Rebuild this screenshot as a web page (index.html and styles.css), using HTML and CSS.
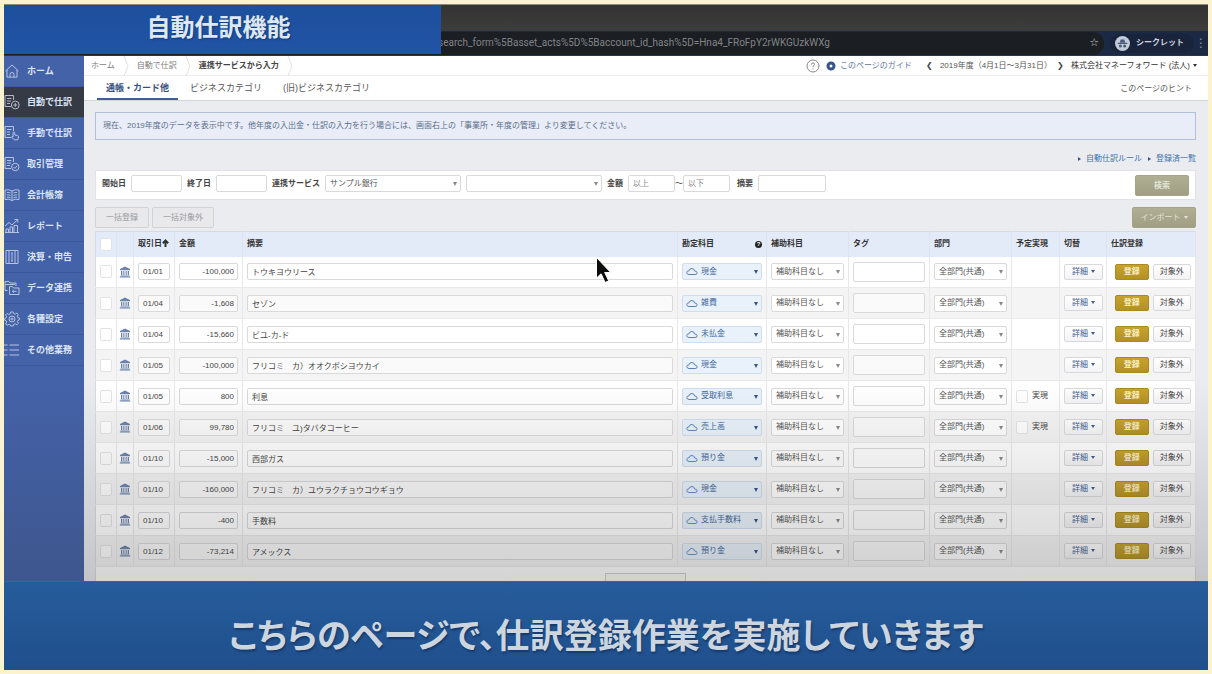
FILE: index.html
```html
<!DOCTYPE html>
<html lang="ja">
<head>
<meta charset="utf-8">
<title>自動仕訳機能</title>
<link rel="stylesheet" href="styles.css">
</head>
<body>
<svg class="sprite" aria-hidden="true">
  <symbol id="i-home" viewBox="0 0 16 16"><path d="M1.500 8 8 2l6.500 6M3 7v7.200h10V7M6 14v-2.500q0-2 2-2t2 2V14"/></symbol>
  <symbol id="i-auto" viewBox="0 0 16 16"><path d="M7 12.500H1V1.500h8.500V6M3 4.500h4.500M3 7h4M3 9.500h3"/><circle cx="11.300" cy="11" r="3.900"/><path d="M11.300 9v4M9.300 11h4"/></symbol>
  <symbol id="i-hand" viewBox="0 0 16 16"><path d="M7 12.500H1V1.500h8.500V6M3 4.500h4.500M3 7h3M3 9.500h3M9 12V7.500q.9-1 1.700 0V10l3 .6q1 .4.8 1.400l-.7 2.800h-3.600L7.500 12q.4-1 1.500-.3"/></symbol>
  <symbol id="i-deal" viewBox="0 0 16 16"><path d="M7 12.500H1V1.500h8.500V6M3 4.500h4.500M3 7h4M3 9.500h3"/><circle cx="11.300" cy="11" r="3.700"/><path d="m9.500 11 1.400 1.400 2.300-2.600"/></symbol>
  <symbol id="i-book" viewBox="0 0 16 16"><path d="M8 4Q5 2 1 3v9.500q4-1 7 1 3-2 7-1V3Q11 2 8 4v9.500M3 5.500q2-.3 3.500.5M3 8q2-.3 3.500.5M3 10.300q2-.3 3.500.5M13 5.500q-2-.3-3.500.5M13 8q-2-.3-3.500.5M13 10.300q-2-.3-3.500.5"/></symbol>
  <symbol id="i-chart" viewBox="0 0 16 16"><path d="M1 14.500h14M2 14v-3h2.500v3M6 14v-5h2.500v5M10 14V7.500h3.500V14M1 8l4-3.500L8 7l5.500-5.200M10.500 1.500h3.300v3"/></symbol>
  <symbol id="i-close" viewBox="0 0 16 16"><path d="M2 1.500h12v13H2zM5 1.500v13M11 1.500v13M7 4h2M8 4v8M7 12h2"/></symbol>
  <symbol id="i-data" viewBox="0 0 16 16"><path d="M3.500 10.500H1v-9h4l1 1.500h6v3M1 4.500h10M5.500 6.500h3l1 1.500h5.500v6.500H5.500zM12.500 11.300h-4m1.500-1.500-1.600 1.500 1.600 1.500"/></symbol>
  <symbol id="i-gear" viewBox="0 0 16 16"><path d="m6.600 1-.4 1.900-1.400.6-1.700-1.100-1.500 1.500 1 1.800L2 7l-1.300.5v1.800l1.500.5.5 1.300-1 1.800 1.400 1.400 1.800-1 1.300.6L6.700 15h2.500l.5-1.600 1.500-.6 1.700 1 1.500-1.500-1-1.700.5-1.200 1.400-.5V7l-1.500-.5-.5-1.300 1-1.600-1.500-1.400-1.600 1-1.400-.5L9.300 1z"/><circle cx="8" cy="8" r="3"/><circle cx="8" cy="8" r="1"/></symbol>
  <symbol id="i-list" viewBox="0 0 16 16"><path d="M0 3h3.500M5.500 3H15M0 8h3.500M5.500 8H15M0 13h3.500M5.500 13H15"/></symbol>
  <symbol id="i-cloud" viewBox="0 0 12 8"><path d="M3 7Q.7 6.800.8 5T3 3.300Q3.600.8 6 1t2.600 2.500q2.400 0 2.500 1.800T9 7z"/></symbol>
  <symbol id="i-bank" viewBox="0 0 12 12"><path d="M6 .5 11 3v1.300H1V3zM2 5h1.300v4H2zM4.300 5h1.100v4H4.300zM6.600 5h1.100v4H6.600zM8.700 5H10v4H8.700zM1.500 9.400h9v.8h-9zM.8 10.600h10.400v1H.800z"/></symbol>
  <symbol id="i-chev" viewBox="0 0 6 20"><path d="m1 0 4 10-4 10"/></symbol>
  <symbol id="i-up" viewBox="0 0 7 8"><path d="M3.500 8V2M.8 4.200 3.500 1.500l2.700 2.700"/></symbol>
</svg>

<div class="frame">
  <header class="browser">
    <div class="tabstrip"></div>
    <div class="toolbar">
      <div class="omnibox">
        <span class="url">search_form%5Basset_acts%5D%5Baccount_id_hash%5D=Hna4_FRoFpY2rWKGUzkWXg</span>
        <span class="star">☆</span>
      </div>
      <div class="incognito">
        <svg viewBox="0 0 14 14"><circle cx="7" cy="7" r="7" fill="#c3cbd9"/><path d="M4.500 6 5.300 3.200h3.400L9.500 6zM2.500 6.400h9v1h-9z" fill="#4a5a78"/><circle cx="5" cy="9.300" r="1.400" fill="#4a5a78"/><circle cx="9" cy="9.300" r="1.400" fill="#4a5a78"/></svg>
        <span>シークレット</span>
      </div>
      <span class="dots">⋮</span>
    </div>
    <h1 class="title">自動仕訳機能</h1>
  </header>

  <div class="app">
    <nav class="side">
      <a href="#"><svg><use href="#i-home"/></svg>ホーム</a>
      <a href="#" class="on"><svg><use href="#i-auto"/></svg>自動で仕訳</a>
      <a href="#"><svg><use href="#i-hand"/></svg>手動で仕訳</a>
      <a href="#"><svg><use href="#i-deal"/></svg>取引管理</a>
      <a href="#"><svg><use href="#i-book"/></svg>会計帳簿</a>
      <a href="#"><svg><use href="#i-chart"/></svg>レポート</a>
      <a href="#"><svg><use href="#i-close"/></svg>決算・申告</a>
      <a href="#"><svg><use href="#i-data"/></svg>データ連携</a>
      <a href="#"><svg><use href="#i-gear"/></svg>各種設定</a>
      <a href="#"><svg><use href="#i-list"/></svg>その他業務</a>
    </nav>

    <main class="main">
      <div class="crumbs">
        <a href="#">ホーム</a><svg><use href="#i-chev"/></svg>
        <a href="#">自動で仕訳</a><svg><use href="#i-chev"/></svg>
        <b>連携サービスから入力</b><svg><use href="#i-chev"/></svg>
        <div class="account">
          <svg class="help" viewBox="0 0 14 14"><circle cx="7" cy="7" r="6"/><path d="M5.400 5.600Q5.400 4 7 4t1.600 1.500Q8.600 6.500 7 7.300V8.300M7 9.400v1"/></svg>
          <a href="#" class="guide"><svg viewBox="0 0 10 10"><circle cx="5" cy="5" r="3"/></svg>このページのガイド</a>
          <b class="arrow">❮</b>
          <span>2019年度（4月1日〜3月31日）</span>
          <b class="arrow">❯</b>
          <span class="company">株式会社マネーフォワード (法人)<i class="caret"></i></span>
        </div>
      </div>
      <div class="tabs">
        <a href="#" class="on">通帳・カード他</a>
        <a href="#">ビジネスカテゴリ</a>
        <a href="#">(旧)ビジネスカテゴリ</a>
        <span class="hint">このページのヒント</span>
      </div>

      <div class="content">
        <p class="notice">現在、2019年度のデータを表示中です。他年度の入出金・仕訳の入力を行う場合には、画面右上の「事業所・年度の管理」より変更してください。</p>
        <div class="links"><a href="#">自動仕訳ルール</a><a href="#">登録済一覧</a></div>

        <form class="filter">
          <label for="from">開始日</label><input id="from" class="box w-date">
          <label for="to">終了日</label><input id="to" class="box w-date">
          <label for="svc">連携サービス</label>
          <span class="select w-svc"><select id="svc"><option>サンプル銀行</option></select></span>
          <span class="select w-svc"><select aria-label="口座"><option></option></select></span>
          <label for="min">金額</label><input id="min" class="box w-num" placeholder="以上"><span class="tilde">〜</span><input class="box w-num" placeholder="以下" aria-label="金額以下">
          <label for="memo" class="memo">摘要</label><input id="memo" class="box w-memo">
          <button type="button" class="olive search">検索</button>
        </form>

        <div class="actions">
          <button class="bulk" disabled>一括登録</button>
          <button class="bulk" disabled>一括対象外</button>
          <button class="olive import">インポート<i class="caret"></i></button>
        </div>

        <table class="grid">
          <colgroup><col class="c-check"><col class="c-icon"><col class="c-date"><col class="c-amount"><col><col class="c-acct"><col class="c-sub"><col class="c-tag"><col class="c-dept"><col class="c-real"><col class="c-detail"><col class="c-reg"></colgroup>
          <thead>
            <tr>
              <th><input type="checkbox" aria-label="すべて選択"></th><th></th>
              <th>取引日<svg class="sort"><use href="#i-up"/></svg></th><th>金額</th><th>摘要</th>
              <th><div class="acct-head">勘定科目<span class="q">?</span></div></th>
              <th>補助科目</th><th>タグ</th><th>部門</th><th>予定実現</th><th>切替</th><th>仕訳登録</th>
            </tr>
          </thead>
          <tbody id="rows"></tbody>
        </table>
        <div class="pager"><div class="pager-box"></div></div>
      </div>
    </main>
    <div class="shade"></div>
    <svg class="cursor" viewBox="0 0 16 28"><path d="M1.500 1.500v20.500l4.600-4.200 4 8.700 3.600-1.700-4-8.300h6z" fill="#0c0c0c" stroke="#fff" stroke-width="1"/></svg>
  </div>

  <footer class="caption">こちらのページで、仕訳登録作業を実施していきます</footer>
</div>
<script src="rows.js"></script>
</body>
</html>
```
FILE: styles.css
```css
* { box-sizing: border-box; }
body {
  margin: 0;
  background: #fbf2cf;
  font: 8px/12px "Liberation Sans", "Noto Sans CJK JP", sans-serif;
  color: #444;
}
a { color: inherit; text-decoration: none; }
input, select, button { font: inherit; color: inherit; margin: 0; }
svg { fill: none; stroke: currentColor; }
.sprite { display: none; }

.frame {
  height: 100vh;
  padding: 4px;
  display: flex;
  flex-direction: column;
}

/* browser chrome */
.browser { position: relative; flex: none; border-top: 1px solid #8b8b80; }
.tabstrip { height: 26px; background: linear-gradient(#333, #3d3d3c); }
.toolbar {
  height: 25px;
  display: flex;
  align-items: center;
  background: #1c2945;
  border-bottom: 1px solid #29344d;
}
.omnibox {
  flex: 1;
  height: 23px;
  display: flex;
  align-items: center;
  justify-content: space-between;
  padding: 0 5px 0 434px;
  background: #1b1e22;
  border-radius: 0 12px 12px 0;
}
.url { font: 10px/14px Roboto, sans-serif; color: #828487; }
.star { font: 700 11px/14px "DejaVu Sans", sans-serif; color: #c4c8ce; }
.incognito {
  display: flex;
  align-items: center;
  gap: 6px;
  margin-left: 6px;
  padding: 0 10px 0 5px;
  height: 19px;
  border-radius: 10px;
  background: #19233b;
  color: #d0d4dc;
  font-weight: 700;
}
.incognito svg { width: 15px; height: 15px; stroke: none; }
.dots { width: 14px; text-align: center; font: 12px/14px "DejaVu Sans", sans-serif; color: #8a93a5; }
.title {
  position: absolute;
  top: 0;
  left: 0;
  width: 437px;
  height: 49px;
  margin: 0;
  padding-right: 8px;
  background: linear-gradient(#1c4f9c, #2254a6);
  font: 700 24px/42px "Noto Sans CJK JP", sans-serif;
  color: #dde8f1;
  text-align: center;
  text-shadow: 1px 1px 2px #123a7a;
}

.app { position: relative; flex: 1; min-height: 0; display: flex; overflow: hidden; }

/* side menu */
.side { width: 80px; flex: none; background: #4462a8; color: #dbe4f5; font-size: 9px; font-weight: 700; }
.side a {
  height: 31px;
  display: flex;
  align-items: center;
  gap: 7px;
  border-bottom: 1px solid #3b589d;
}
.side a.on { background: #363a45; }
.side svg { width: 16px; height: 16px; opacity: .75; }

.main { flex: 1; min-width: 0; display: flex; flex-direction: column; background: #ebecf0; }

.crumbs {
  height: 20px;
  display: flex;
  align-items: center;
  gap: 8px;
  padding: 0 11px 0 7px;
  background: #fff;
  border-bottom: 1px solid #ececee;
  color: #7d7d7d;
}
.crumbs > svg { width: 6px; height: 20px; color: #e2e2e2; }
.crumbs b { color: #444; }
.account { margin-left: auto; display: flex; align-items: center; color: #555; }
.help { width: 14px; height: 14px; color: #888; }
.guide { display: flex; align-items: center; gap: 4px; margin: 0 14px 0 6px; color: #5b779b; }
.guide svg { width: 10px; height: 10px; color: #34548b; stroke-width: 3; }
.account .arrow { color: #444; width: 6px; margin-right: 8px; font-family: "DejaVu Sans", sans-serif; }
.account span + .arrow { margin-left: 5px; }
.company { color: #333; }
.caret {
  display: inline-block;
  margin-left: 3px;
  vertical-align: middle;
  border: 2px solid transparent;
  border-top: 3px solid;
  border-bottom: 0;
}

.tabs {
  height: 25px;
  display: flex;
  gap: 3px;
  padding: 0 16px 0 13px;
  background: #fff;
  border-bottom: 1px solid #d4d5d9;
  font-size: 9px;
  line-height: 25px;
  color: #555;
}
.tabs a { padding: 0 9px; }
.tabs .on { font-weight: 700; color: #35507f; border-bottom: 2px solid #3f5f92; }
.hint { margin-left: auto; font-size: 8px; }

.content { flex: 1; min-height: 0; display: flex; flex-direction: column; padding: 11px 12px 0 11px; }
.content > * { flex: none; }
.notice {
  margin: 0;
  height: 28px;
  padding: 0 7px;
  border: 1px solid #b3c0d9;
  background: #e8edf7;
  line-height: 26px;
  color: #5c6d8c;
}
.links { display: flex; justify-content: flex-end; gap: 6px; margin: 13px 0 5px; color: #3f72ac; }
.links a::before {
  content: "";
  display: inline-block;
  margin-right: 5px;
  border: 2px solid transparent;
  border-left: 3px solid #34548b;
  border-right: 0;
}

.box, .select select {
  height: 17px;
  border: 1px solid #d9d9dc;
  border-radius: 2px;
  background: #fff;
  padding: 0 4px;
  outline: 0;
}
.box::placeholder { color: #888; opacity: 1; }
.select { position: relative; display: block; }
.select select { display: block; width: 100%; appearance: none; color: #555; }
.select::after {
  content: "";
  position: absolute;
  right: 4px;
  top: 7px;
  border: 2px solid transparent;
  border-top: 4px solid #888;
  border-bottom: 0;
}

.filter {
  height: 30px;
  display: flex;
  align-items: flex-start;
  gap: 5px;
  padding: 4px 6px;
  background: #fff;
  border: 1px solid #e2e2e4;
}
.filter label { font-weight: 700; line-height: 17px; color: #444; }
.filter .tilde { line-height: 17px; margin: 0 -5px; }
.filter .memo { margin-left: 2px; }
.w-date { width: 51px; }
.w-svc { width: 136px; }
.w-num { width: 47px; }
.w-memo { width: 68px; }

.olive {
  height: 21px;
  border: 1px solid #a5a489;
  border-radius: 2px;
  background: linear-gradient(#b0af94, #a09f83);
  color: #e4e4d6;
}
.search { width: 54px; margin-left: auto; font-weight: 700; }
.import { width: 64px; padding: 0; margin-left: auto; }

.actions { display: flex; gap: 3px; margin: 7px 0 3px; }
.bulk {
  height: 21px;
  padding: 0 10px;
  border: 1px solid #d2d3d6;
  border-radius: 2px;
  background: #e9e9ec;
  color: #9a9a9d;
}

/* journal table */
.grid { width: 100%; table-layout: fixed; border-collapse: collapse; background: #fff; border: 1px solid #d8dae0; }
.grid th, .grid td { padding: 0 4px; border-right: 1px solid #e8e8ea; text-align: left; }
.grid th { height: 25px; background: #e4ebf8; font-weight: 700; color: #333; white-space: nowrap; border-right-color: #dce4f2; }
.grid td { height: 31px; border-bottom: 1px solid #e9e9eb; }
.grid tbody tr:nth-child(even) { background: #f4f4f5; }
.c-check { width: 21px; }
.c-icon { width: 17px; }
.c-date { width: 41px; }
.c-amount { width: 68px; }
.c-acct { width: 89px; }
.c-sub, .c-dept { width: 82px; }
.c-tag { width: 81px; }
.c-real { width: 48px; }
.c-detail { width: 47px; }
.c-reg { width: 89px; }
.sort { width: 7px; height: 8px; vertical-align: -1px; stroke-width: 2; }
.grid .icon { padding: 0 2px; }
.grid .icon svg { display: block; width: 12px; height: 12px; fill: #6a82ac; stroke: none; }
.grid .box { display: block; width: 100%; }
.grid tr:nth-child(even) .box { background: #fafafa; }
.grid .amount { text-align: right; padding: 0 3px; }
.grid tr .tag { height: 20px; background: #fff; }
.grid input[type="checkbox"] {
  appearance: none;
  display: block;
  flex: none;
  width: 12px;
  height: 13px;
  border: 1px solid #e3e3e6;
  border-radius: 2px;
  background: #fff;
}
.acct-head { display: flex; justify-content: space-between; align-items: center; }
.q { width: 7px; height: 7px; border-radius: 50%; background: #222; color: #fff; font-size: 6px; line-height: 7px; text-align: center; }
.acct select { padding-left: 18px; background: #e9f2fb; border-color: #cfdeee; color: #3f669c; }
.acct svg { position: absolute; left: 4px; top: 4px; width: 12px; height: 9px; color: #5b82b4; z-index: 1; }
.acct::after { border-top-color: #34548b; }
.real, .pair { display: flex; align-items: center; gap: 4px; }
.pair { padding-left: 4px; }
.btn {
  height: 16px;
  padding: 0;
  border: 1px solid #d9d9dc;
  border-radius: 2px;
  background: linear-gradient(#fff, #f3f3f5);
  white-space: nowrap;
}
.detail { width: 39px; color: #3c5e94; }
.gold { width: 34px; border-color: #a98a1f; background: linear-gradient(#c7a22d, #b39125); color: #fbf0c4; font-weight: 700; }
.skip { width: 39px; }

.content > .pager { flex: 1; padding-top: 6px; background: #fff; border: 1px solid #d8dae0; border-top: 0; }
.pager-box { width: 81px; height: 20px; margin: 0 auto; border: 1px solid #cfcfcf; background: #fbfbfb; }

/* video overlay layers */
.shade {
  position: absolute;
  inset: 62% 0 0 0;
  background: linear-gradient(rgba(40, 40, 40, 0), rgba(40, 40, 40, .2));
  pointer-events: none;
}
.cursor { position: absolute; left: 591px; top: 200px; width: 16px; height: 28px; }
.caption {
  flex: none;
  height: 89px;
  border-top: 1px solid #2a6a9e;
  background: linear-gradient(#265c9b, #204f8c);
  font: 700 34px/104px "Noto Sans CJK JP", sans-serif;
  font-feature-settings: "palt";
  text-align: center;
  color: #cdd6df;
  text-shadow: 1px 2px 2px #17396a;
}
```
FILE: rows.js
```javascript
const entries = [
  ["01/01", "-100,000", "トウキヨウリース", "現金"],
  ["01/04", "-1,608", "セゾン", "雑費"],
  ["01/04", "-15,660", "ビユ-カ-ド", "未払金"],
  ["01/05", "-100,000", "フリコミ　カ）オオクボシヨウカイ", "現金"],
  ["01/05", "800", "利息", "受取利息", true],
  ["01/06", "99,780", "フリコミ　ユ)タバタコーヒー", "売上高", true],
  ["01/10", "-15,000", "西部ガス", "預り金"],
  ["01/10", "-160,000", "フリコミ　カ）ユウラクチョウコウギョウ", "現金"],
  ["01/10", "-400", "手数料", "支払手数料"],
  ["01/12", "-73,214", "アメックス", "預り金"]
];

document.getElementById("rows").innerHTML = entries.map(([date, amount, memo, account, planned]) => `
  <tr>
    <td><input type="checkbox" aria-label="選択"></td>
    <td class="icon"><svg><use href="#i-bank"/></svg></td>
    <td><input class="box" value="${date}" aria-label="取引日"></td>
    <td><input class="box amount" value="${amount}" aria-label="金額"></td>
    <td><input class="box" value="${memo}" aria-label="摘要"></td>
    <td><span class="select acct"><svg><use href="#i-cloud"/></svg><select aria-label="勘定科目"><option>${account}</option></select></span></td>
    <td><span class="select"><select aria-label="補助科目"><option>補助科目なし</option></select></span></td>
    <td><input class="box tag" aria-label="タグ"></td>
    <td><span class="select"><select aria-label="部門"><option>全部門(共通)</option></select></span></td>
    <td>${planned ? '<label class="real"><input type="checkbox">実現</label>' : ""}</td>
    <td><button class="btn detail">詳細<i class="caret"></i></button></td>
    <td><div class="pair"><button class="btn gold">登録</button><button class="btn skip">対象外</button></div></td>
  </tr>`).join("");
```
